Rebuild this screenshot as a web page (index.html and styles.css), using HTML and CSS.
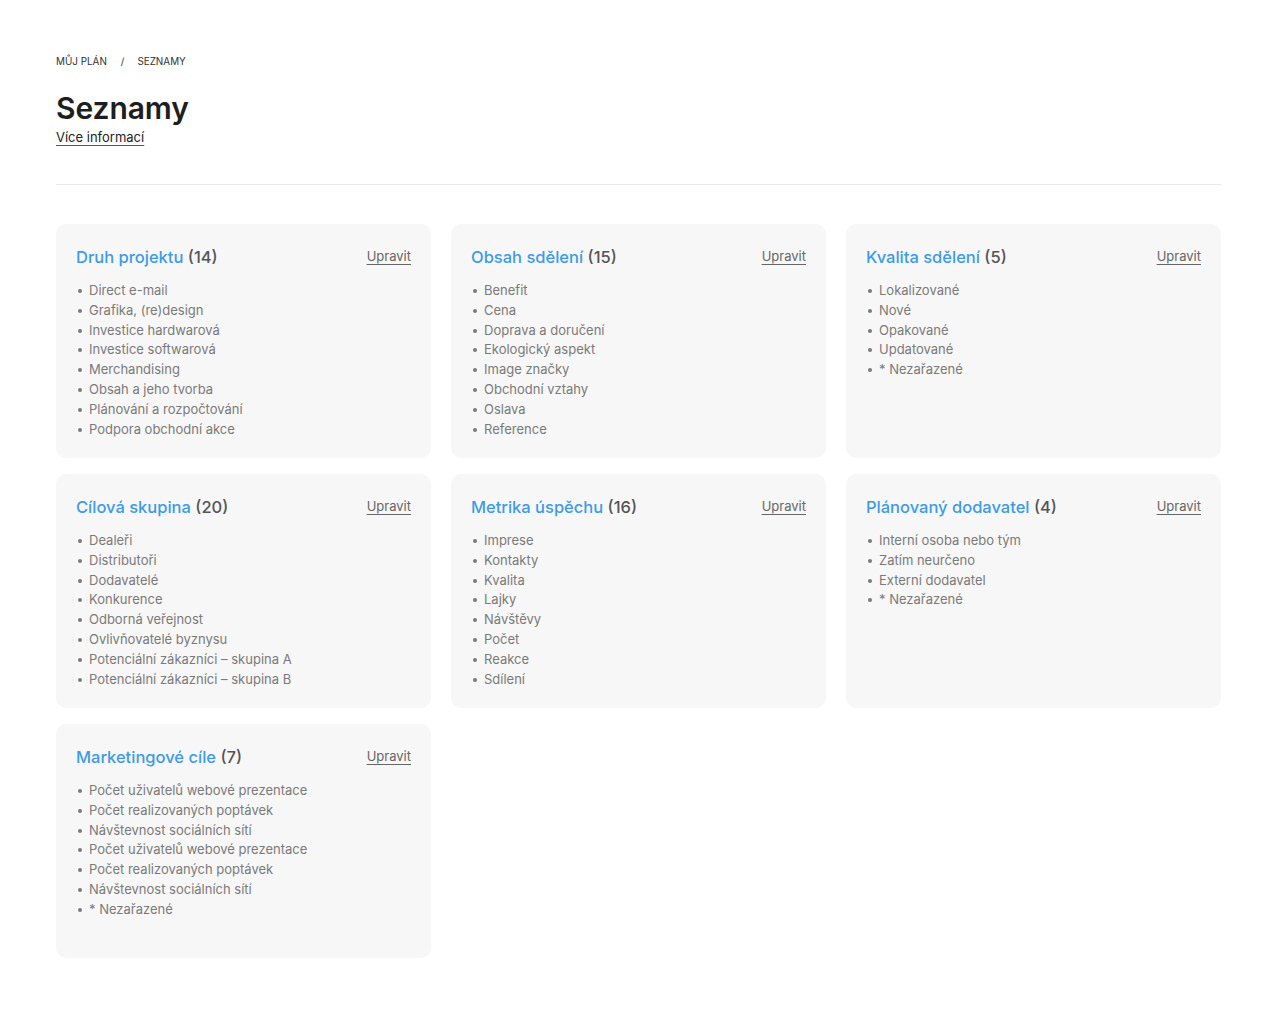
FILE: index.html
```html
<!DOCTYPE html>
<html lang="cs">
<head>
<meta charset="utf-8">
<title>Seznamy</title>
<link rel="stylesheet" href="styles.css">
</head>
<body>
<div class="page">
  <nav class="crumbs"><span>Můj plán</span><span class="sep">/</span><span>Seznamy</span></nav>
  <h1 class="title">Seznamy</h1>
  <a class="more" href="#">Více informací</a>
  <hr class="divider">
  <div class="grid">
    <section class="card">
      <div class="card-head"><h2><span class="name">Druh projektu</span> <span class="count">(14)</span></h2><a class="edit" href="#">Upravit</a></div>
      <ul>
        <li>Direct e-mail</li><li>Grafika, (re)design</li><li>Investice hardwarová</li><li>Investice softwarová</li><li>Merchandising</li><li>Obsah a jeho tvorba</li><li>Plánování a rozpočtování</li><li>Podpora obchodní akce</li>
      </ul>
    </section>
    <section class="card">
      <div class="card-head"><h2><span class="name">Obsah sdělení</span> <span class="count">(15)</span></h2><a class="edit" href="#">Upravit</a></div>
      <ul>
        <li>Benefit</li><li>Cena</li><li>Doprava a doručení</li><li>Ekologický aspekt</li><li>Image značky</li><li>Obchodní vztahy</li><li>Oslava</li><li>Reference</li>
      </ul>
    </section>
    <section class="card">
      <div class="card-head"><h2><span class="name">Kvalita sdělení</span> <span class="count">(5)</span></h2><a class="edit" href="#">Upravit</a></div>
      <ul>
        <li>Lokalizované</li><li>Nové</li><li>Opakované</li><li>Updatované</li><li>* Nezařazené</li>
      </ul>
    </section>
    <section class="card">
      <div class="card-head"><h2><span class="name">Cílová skupina</span> <span class="count">(20)</span></h2><a class="edit" href="#">Upravit</a></div>
      <ul>
        <li>Dealeři</li><li>Distributoři</li><li>Dodavatelé</li><li>Konkurence</li><li>Odborná veřejnost</li><li>Ovlivňovatelé byznysu</li><li>Potenciální zákazníci – skupina A</li><li>Potenciální zákazníci – skupina B</li>
      </ul>
    </section>
    <section class="card">
      <div class="card-head"><h2><span class="name">Metrika úspěchu</span> <span class="count">(16)</span></h2><a class="edit" href="#">Upravit</a></div>
      <ul>
        <li>Imprese</li><li>Kontakty</li><li>Kvalita</li><li>Lajky</li><li>Návštěvy</li><li>Počet</li><li>Reakce</li><li>Sdílení</li>
      </ul>
    </section>
    <section class="card">
      <div class="card-head"><h2><span class="name">Plánovaný dodavatel</span> <span class="count">(4)</span></h2><a class="edit" href="#">Upravit</a></div>
      <ul>
        <li>Interní osoba nebo tým</li><li>Zatím neurčeno</li><li>Externí dodavatel</li><li>* Nezařazené</li>
      </ul>
    </section>
    <section class="card">
      <div class="card-head"><h2><span class="name">Marketingové cíle</span> <span class="count">(7)</span></h2><a class="edit" href="#">Upravit</a></div>
      <ul>
        <li>Počet uživatelů webové prezentace</li><li>Počet realizovaných poptávek</li><li>Návštevnost sociálních sítí</li><li>Počet uživatelů webové prezentace</li><li>Počet realizovaných poptávek</li><li>Návštevnost sociálních sítí</li><li>* Nezařazené</li>
      </ul>
    </section>
  </div>
</div>
</body>
</html>
```

FILE: styles.css
```css
* { box-sizing: border-box; }
html, body { margin: 0; padding: 0; background: #fff; }
body {
  font-family: Inter, "Noto Sans", "Liberation Sans", sans-serif;
  color: #222;
}
.page {
  padding: 55px 56px 40px 56px;
}
.crumbs {
  display: flex;
  align-items: center;
  font-size: 9.9px;
  line-height: 12px;
  text-transform: uppercase;
  color: #333;
}
.crumbs .sep { margin: 0 13px 0 14px; }
.title {
  margin: 23px 0 0 0;
  font-size: 30px;
  line-height: 36px;
  font-weight: 600;
  color: #1e1e1e;
  letter-spacing: -0.1px;
}
.more {
  display: inline-block;
  font-size: 13px;
  line-height: 18px;
  color: #222;
  text-decoration: underline;
  text-underline-offset: 3px;
  text-decoration-color: #555;
}
.divider {
  border: 0;
  height: 1px;
  background: #e9e9e9;
  margin: 38px 0 39px 0;
}
.grid {
  display: grid;
  grid-template-columns: repeat(3, 1fr);
  column-gap: 20px;
  row-gap: 16px;
}
.card {
  background: #f7f7f7;
  border-radius: 10px;
  height: 234px;
  padding: 21px 20px 20px 20px;
}
.card-head {
  display: flex;
  justify-content: space-between;
  align-items: center;
}
.card h2 {
  margin: 0;
  font-size: 16.5px;
  line-height: 24px;
  font-weight: 500;
}
.name { color: #3d9be6; }
.count { color: #555; }
.edit {
  font-size: 13px;
  line-height: 18px;
  color: #666;
  text-decoration: underline;
  text-underline-offset: 3px;
  margin-top: -2px;
}
.card ul {
  list-style: none;
  margin: 12px 0 0 0;
  padding: 0;
}
.card li {
  position: relative;
  padding-left: 13px;
  font-size: 13px;
  line-height: 19.8px;
  color: #7a7a7a;
}
.card li::before {
  content: "";
  position: absolute;
  left: 2px;
  top: 8px;
  width: 4px;
  height: 4px;
  border-radius: 50%;
  background: #7a7a7a;
}
```
